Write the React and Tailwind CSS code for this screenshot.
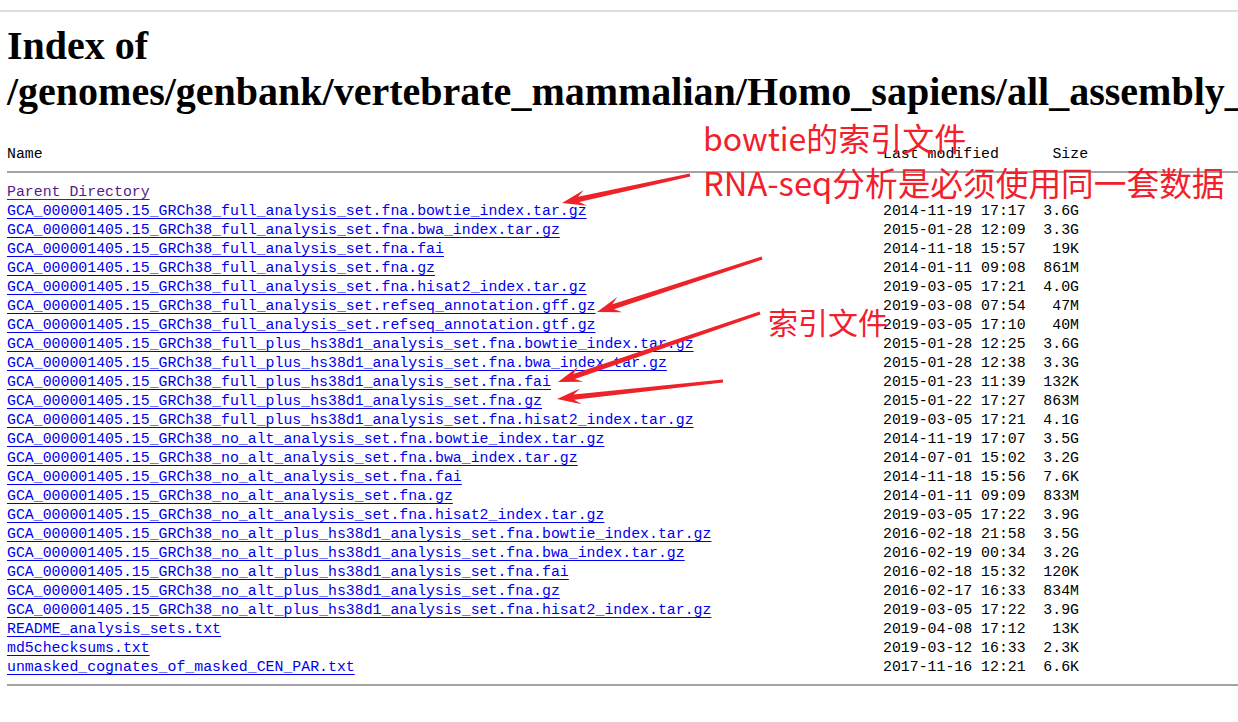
import React from 'react';

const files = [
  ['GCA_000001405.15_GRCh38_full_analysis_set.fna.bowtie_index.tar.gz', '2014-11-19 17:17', '3.6G'],
  ['GCA_000001405.15_GRCh38_full_analysis_set.fna.bwa_index.tar.gz', '2015-01-28 12:09', '3.3G'],
  ['GCA_000001405.15_GRCh38_full_analysis_set.fna.fai', '2014-11-18 15:57', '19K'],
  ['GCA_000001405.15_GRCh38_full_analysis_set.fna.gz', '2014-01-11 09:08', '861M'],
  ['GCA_000001405.15_GRCh38_full_analysis_set.fna.hisat2_index.tar.gz', '2019-03-05 17:21', '4.0G'],
  ['GCA_000001405.15_GRCh38_full_analysis_set.refseq_annotation.gff.gz', '2019-03-08 07:54', '47M'],
  ['GCA_000001405.15_GRCh38_full_analysis_set.refseq_annotation.gtf.gz', '2019-03-05 17:10', '40M'],
  ['GCA_000001405.15_GRCh38_full_plus_hs38d1_analysis_set.fna.bowtie_index.tar.gz', '2015-01-28 12:25', '3.6G'],
  ['GCA_000001405.15_GRCh38_full_plus_hs38d1_analysis_set.fna.bwa_index.tar.gz', '2015-01-28 12:38', '3.3G'],
  ['GCA_000001405.15_GRCh38_full_plus_hs38d1_analysis_set.fna.fai', '2015-01-23 11:39', '132K'],
  ['GCA_000001405.15_GRCh38_full_plus_hs38d1_analysis_set.fna.gz', '2015-01-22 17:27', '863M'],
  ['GCA_000001405.15_GRCh38_full_plus_hs38d1_analysis_set.fna.hisat2_index.tar.gz', '2019-03-05 17:21', '4.1G'],
  ['GCA_000001405.15_GRCh38_no_alt_analysis_set.fna.bowtie_index.tar.gz', '2014-11-19 17:07', '3.5G'],
  ['GCA_000001405.15_GRCh38_no_alt_analysis_set.fna.bwa_index.tar.gz', '2014-07-01 15:02', '3.2G'],
  ['GCA_000001405.15_GRCh38_no_alt_analysis_set.fna.fai', '2014-11-18 15:56', '7.6K'],
  ['GCA_000001405.15_GRCh38_no_alt_analysis_set.fna.gz', '2014-01-11 09:09', '833M'],
  ['GCA_000001405.15_GRCh38_no_alt_analysis_set.fna.hisat2_index.tar.gz', '2019-03-05 17:22', '3.9G'],
  ['GCA_000001405.15_GRCh38_no_alt_plus_hs38d1_analysis_set.fna.bowtie_index.tar.gz', '2016-02-18 21:58', '3.5G'],
  ['GCA_000001405.15_GRCh38_no_alt_plus_hs38d1_analysis_set.fna.bwa_index.tar.gz', '2016-02-19 00:34', '3.2G'],
  ['GCA_000001405.15_GRCh38_no_alt_plus_hs38d1_analysis_set.fna.fai', '2016-02-18 15:32', '120K'],
  ['GCA_000001405.15_GRCh38_no_alt_plus_hs38d1_analysis_set.fna.gz', '2016-02-17 16:33', '834M'],
  ['GCA_000001405.15_GRCh38_no_alt_plus_hs38d1_analysis_set.fna.hisat2_index.tar.gz', '2019-03-05 17:22', '3.9G'],
  ['README_analysis_sets.txt', '2019-04-08 17:12', '13K'],
  ['md5checksums.txt', '2019-03-12 16:33', '2.3K'],
  ['unmasked_cognates_of_masked_CEN_PAR.txt', '2017-11-16 12:21', '6.6K'],
];

// red annotation arrows: [tailX, tailY, tipX, tipY]
const arrows = [
  [690, 175, 562, 203],
  [762, 258, 597, 312],
  [760, 313, 558, 382],
  [723, 381, 557, 399],
];

function arrowPoints([x1, y1, x2, y2]) {
  const len = Math.hypot(x2 - x1, y2 - y1);
  const ux = (x2 - x1) / len;
  const uy = (y2 - y1) / len;
  const nx = -uy;
  const ny = ux;
  const at = (back, side) => `${x2 - ux * back + nx * side},${y2 - uy * back + ny * side}`;
  return [
    `${x1 + nx * 1.6},${y1 + ny * 1.6}`,
    at(17, 2.6),
    at(24, 8),
    `${x2},${y2}`,
    at(24, -8),
    at(17, -2.6),
    `${x1 - nx * 1.6},${y1 - ny * 1.6}`,
  ].join(' ');
}

const FileRow = ({ name, date, size, parent }) => (
  <div className="flex h-[19px] whitespace-pre">
    <div className="w-[876px] shrink-0">
      <a
        href="#"
        className={
          parent
            ? 'text-[#551a8b] underline underline-offset-[3px]'
            : 'text-[#0000ee] underline underline-offset-[3px]'
        }
      >
        {name}
      </a>
    </div>
    <div className="flex w-[196px] shrink-0 justify-between">
      <span>{date}</span>
      <span>{size}</span>
    </div>
  </div>
);

export default function App() {
  return (
    <div className="relative h-[722px] w-full overflow-hidden bg-white text-black">
      <div className="h-[12px] border-b-2 border-[#dedede]" />

      <div className="pl-[7px]">
        <h1 className="mt-[11px] whitespace-nowrap font-['Liberation_Serif',serif] text-[40px] leading-[46px] font-bold">
          Index of
          <br />
          /genomes/genbank/vertebrate_mammalian/Homo_sapiens/all_assembly_versions/GCA_000001405.15_GRCh38/seqs_for_alignment_pipelines.ucsc_ids/
        </h1>

        <div className="font-['Liberation_Mono',monospace] text-[14.87px] leading-[19px]">
          <div className="mt-[30px] flex h-[19px] whitespace-pre">
            <div className="w-[876px] shrink-0">Name</div>
            <div>Last modified      Size</div>
          </div>
          <div className="mt-[7px] h-[2px] bg-[#a3a3a3]" />

          <div className="mt-[10px] flex flex-col">
            <FileRow name="Parent Directory" date="" size="-" parent />
            {files.map(([name, date, size]) => (
              <FileRow key={name} name={name} date={date} size={size} />
            ))}
          </div>

          <div className="mt-[7px] h-[2px] bg-[#a3a3a3]" />
        </div>
      </div>

      {/* annotations drawn over the listing */}
      <svg className="pointer-events-none absolute left-0 top-0" width="1238" height="722">
        {arrows.map((a, i) => (
          <polygon key={i} points={arrowPoints(a)} fill="#ee2229" />
        ))}
      </svg>

      <div className="pointer-events-none absolute left-[703px] top-[120px] whitespace-nowrap font-['Noto_Sans_CJK_SC',sans-serif] text-[#f2202b]">
        <div className="text-[32px] leading-[34px]">bowtie的索引文件</div>
        <div className="mt-[10px] text-[32.7px] leading-[36px]">RNA-seq分析是必须使用同一套数据</div>
      </div>
      <div className="pointer-events-none absolute left-[768px] top-[305px] whitespace-nowrap font-['Noto_Sans_CJK_SC',sans-serif] text-[30px] leading-[32px] text-[#f2202b]">
        索引文件
      </div>
    </div>
  );
}
